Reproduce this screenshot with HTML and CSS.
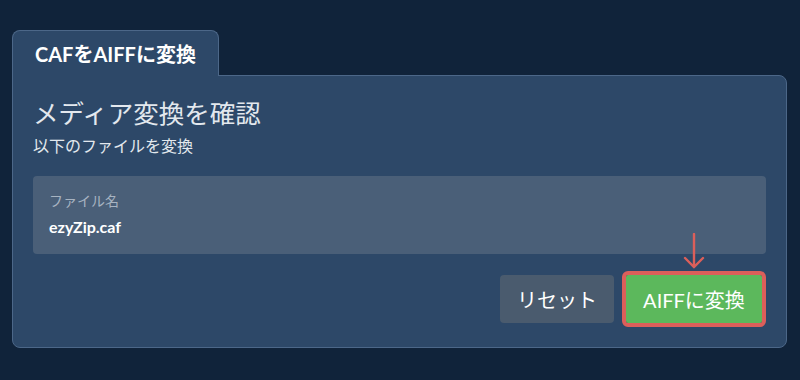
FILE: index.html
```html
<!DOCTYPE html>
<html>
  <head>
    <meta charset="utf-8"/>
    <link rel="stylesheet" href="styles.css">
  </head>
  <body>
    <div class="converter">
      <div class="tab">CAFをAIFFに変換</div>
      <div class="panel">
        <h2 class="title">メディア変換を確認</h2>
        <p class="subtitle">以下のファイルを変換</p>

        <div class="field">
          <div class="field-label">ファイル名</div>
          <div class="field-value">ezyZip.caf</div>
        </div>

        <div class="actions">
          <button class="btn btn-reset">リセット</button>
          <div class="convert-wrap">
            <!-- pointer arrow over the main button -->
            <svg class="pointer" width="24" height="36" viewBox="0 0 24 36">
              <path d="M12 1 L12 34 M3 25 L12 34 L21 25" fill="none" stroke="#dc5f5a" stroke-width="2.4" stroke-linecap="round"/>
            </svg>
            <button class="btn btn-convert">AIFFに変換</button>
          </div>
        </div>
      </div>
    </div>
  </body>
</html>
```

FILE: styles.css
```css
body {
  margin: 0;
  background: #10233a;
  font-family: Lato, "Noto Sans CJK JP", sans-serif;
  color: #e6ebf1;
}
.converter {
  padding: 30px 13px 0 12px;
}
.tab {
  display: inline-block;
  box-sizing: border-box;
  height: 46px;
  padding: 0 22px 0 22px;
  line-height: 46px;
  font-size: 20px;
  font-weight: bold;
  color: #ffffff;
  background: #2d4868;
  border: 1px solid #4c6788;
  border-bottom: none;
  border-radius: 8px 8px 0 0;
  position: relative;
  z-index: 1;
  margin-bottom: -1px;
}
.panel {
  background: #2d4868;
  border: 1px solid #4c6788;
  border-radius: 0 8px 8px 8px;
  padding: 20px 20px 24px 20px;
}
.title {
  margin: 0;
  font-size: 25.5px;
  font-weight: normal;
  line-height: 34px;
  color: #e3e8ee;
}
.subtitle {
  margin: 6px 0 0 0;
  font-size: 16px;
  line-height: 20px;
  color: #e3e8ee;
}
.field {
  margin-top: 20px;
  background: #4a5f78;
  border-radius: 4px;
  height: 78px;
  box-sizing: border-box;
  padding: 16px 16px 0 16px;
}
.field-label {
  font-size: 14px;
  line-height: 18px;
  color: #a7b3c1;
}
.field-value {
  margin-top: 7px;
  font-size: 16px;
  font-weight: bold;
  line-height: 20px;
  color: #ffffff;
}
.actions {
  display: flex;
  justify-content: flex-end;
  align-items: center;
  gap: 12px;
  margin-top: 21px;
}
.btn {
  height: 48px;
  border: none;
  border-radius: 4px;
  font-family: Lato, "Noto Sans CJK JP", sans-serif;
  font-size: 20px;
  color: #ffffff;
  padding: 0;
}
.btn-reset {
  width: 114px;
  background: #4a5b6e;
}
.convert-wrap {
  position: relative;
  margin-right: 4px;
}
.btn-convert {
  display: block;
  width: 136px;
  background: #5cb85c;
  outline: 4px solid #dc5f5a;
  border-radius: 2px;
}
.pointer {
  position: absolute;
  left: 56px;
  top: -42px;
}
```
